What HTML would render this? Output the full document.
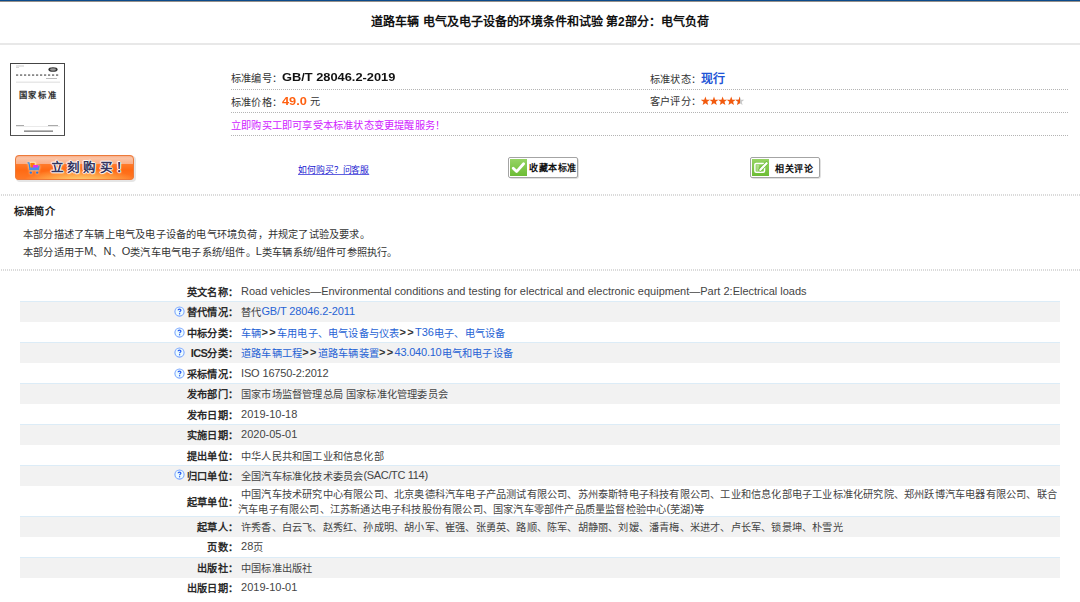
<!DOCTYPE html>
<html lang="zh-CN">
<head>
<meta charset="utf-8">
<style>
html,body{margin:0;padding:0;background:#fff;}
body{width:1080px;height:602px;overflow:hidden;position:relative;font-family:"Liberation Sans",sans-serif;color:#333;}
.abs{position:absolute;white-space:nowrap;}
.topbar{position:absolute;left:0;top:0;width:1080px;height:1px;background:#0b4a8b;}
.topbar2{position:absolute;left:0;top:1px;width:1080px;height:1px;background:#96908a;}
.title{position:absolute;left:0;top:12px;width:1080px;text-align:center;font-size:12px;font-weight:bold;color:#111;line-height:20px;}
.hline{position:absolute;left:0;top:43px;width:1080px;height:2px;background:#e8e8e8;}
.dots{position:absolute;height:1px;background:repeating-linear-gradient(90deg,#b4b4b4 0,#b4b4b4 1px,#fff 1px,#fff 2px);}
.dots2{position:absolute;height:2px;background:repeating-linear-gradient(90deg,#fff 0,#fff 1px,#dadada 1px,#dadada 2px);}
.lbl{font-size:10.2px;color:#333;letter-spacing:.2px;}
.t12{font-size:10.2px;color:#333;letter-spacing:.2px;}
table{border-collapse:collapse;}
.row{position:absolute;left:20px;width:1040px;}
.row.g{background:#f2f2f2;border-top:1px solid #dcecf7;}
.k{position:absolute;right:842px;font-weight:bold;font-size:10.2px;letter-spacing:.2px;line-height:20px;color:#2a2a2a;white-space:nowrap;}
.v{position:absolute;left:238px;font-size:10.2px;letter-spacing:.2px;line-height:20px;color:#444;white-space:nowrap;}
.L{font-size:11px;letter-spacing:0;position:relative;top:-1px;line-height:10px;}
.gt{font-weight:bold;color:#333;font-size:11px;letter-spacing:1.35px;position:relative;top:-1px;line-height:10px;}
a{color:#2763d5;text-decoration:none;}
.q{position:absolute;}
</style>
</head>
<body>
<div class="topbar"></div><div class="topbar2"></div>
<div class="title">道路车辆 电气及电子设备的环境条件和试验 第2部分：电气负荷</div>
<div class="hline"></div>

<!-- cover -->
<svg class="abs" style="left:10px;top:63px;" width="55" height="73" viewBox="0 0 55 73">
<rect x="0.5" y="0.5" width="54" height="72" fill="#fff" stroke="#444" stroke-width="1"/>
<rect x="0" y="72" width="55" height="1" fill="#555"/>
<rect x="6" y="2.6" width="8" height="0.8" fill="#bbb"/>
<rect x="6" y="4" width="3" height="0.8" fill="#ccc"/>
<ellipse cx="43" cy="6.5" rx="4.6" ry="2.3" fill="#333"/>
<ellipse cx="43" cy="6.5" rx="3" ry="1.2" fill="#999"/>
<g fill="#8a8a8a">
<rect x="6" y="11.2" width="2.2" height="1.8"/><rect x="10" y="11.2" width="2.2" height="1.8"/><rect x="14" y="11.2" width="2.2" height="1.8"/><rect x="18" y="11.2" width="2.2" height="1.8"/><rect x="22" y="11.2" width="2.2" height="1.8"/><rect x="26" y="11.2" width="2.2" height="1.8"/><rect x="30" y="11.2" width="2.2" height="1.8"/><rect x="34" y="11.2" width="2.2" height="1.8"/><rect x="38" y="11.2" width="2.2" height="1.8"/><rect x="42" y="11.2" width="2.2" height="1.8"/><rect x="46" y="11.2" width="2.2" height="1.8"/>
</g>
<rect x="36" y="15" width="11" height="0.8" fill="#aaa"/>
<rect x="6" y="18.5" width="44" height="1.5" fill="#e8e8e8"/>
<text x="8.6" y="35" style="font-family:'Liberation Serif',serif;font-weight:bold;font-size:8.3px;letter-spacing:1.75px;" fill="#333">国家标准</text>
<rect x="6" y="63" width="44" height="0.6" fill="#ddd"/>
<rect x="6" y="62" width="8" height="1" fill="#aaa"/>
<rect x="38" y="62" width="10" height="1" fill="#aaa"/>
<rect x="14" y="67.5" width="29" height="1.3" fill="#777"/>
</svg>

<!-- info -->
<div class="abs lbl" style="left:231px;top:71px;line-height:16px;">标准编号：</div>
<div class="abs" style="left:282px;top:69px;line-height:16px;font-size:11.5px;font-weight:bold;color:#111;transform-origin:0 0;transform:scaleX(1.115);">GB/T 28046.2-2019</div>
<div class="abs lbl" style="left:231px;top:94.5px;line-height:16px;">标准价格：</div>
<div class="abs" style="left:282px;top:93px;line-height:16px;font-size:11px;font-weight:bold;color:#ff6010;transform-origin:0 0;transform:scaleX(1.16);">49.0</div>
<div class="abs lbl" style="left:309.5px;top:94px;line-height:16px;">元</div>
<div class="abs t12" style="left:231px;top:118px;line-height:16px;color:#d020ff;">立即购买工即可享受本标准状态变更提醒服务！</div>
<div class="abs lbl" style="left:650px;top:71.5px;line-height:16px;">标准状态：</div>
<div class="abs" style="left:701px;top:70.5px;line-height:16px;font-size:12px;font-weight:bold;letter-spacing:-.2px;color:#1f55d6;">现行</div>
<div class="abs lbl" style="left:650px;top:94px;line-height:16px;">客户评分：</div>
<svg class="abs" style="left:701px;top:96px;" width="45" height="10" viewBox="0 0 45 10">
<defs><clipPath id="half"><rect x="0" y="0" width="4.6" height="10"/></clipPath>
<path id="st" d="M4.4 0 L5.55 3.25 L8.9 3.3 L6.3 5.35 L7.2 8.6 L4.4 6.75 L1.6 8.6 L2.5 5.35 L-0.1 3.3 L3.25 3.25 Z"/></defs>
<use href="#st" x="0" y="0.5" fill="#f25a0e"/>
<use href="#st" x="8.6" y="0.5" fill="#f25a0e"/>
<use href="#st" x="17.2" y="0.5" fill="#f25a0e"/>
<use href="#st" x="25.8" y="0.5" fill="#f25a0e"/>
<use href="#st" x="34.4" y="0.5" fill="#c8c8c8"/>
<g transform="translate(34.4 0.5)"><use href="#st" fill="#f25a0e" clip-path="url(#half)"/></g>
</svg>
<div class="dots" style="left:231px;top:89px;width:838px;"></div>
<div class="dots" style="left:231px;top:112px;width:838px;"></div>
<div class="dots" style="left:231px;top:135px;width:838px;"></div>

<!-- buy button -->
<div class="abs" style="left:16px;top:156px;width:120px;height:26px;border-radius:4px;background:rgba(0,0,0,.10);"></div>
<div class="abs buy" style="left:15px;top:155px;width:119px;height:25px;border-radius:4px;overflow:hidden;">
  <div style="position:absolute;left:0;top:0;width:119px;height:25px;background:linear-gradient(180deg,#f6a27a 0,#fbc4a6 12%,#fab08a 34%,#ff7a2a 38%,#ff6a14 60%,#ff7a28 100%);"></div>
  <div style="position:absolute;left:10px;top:14px;width:110px;height:22px;border-radius:50%;background:radial-gradient(ellipse at 50% 60%,rgba(255,230,140,.95) 0,rgba(255,200,100,.6) 40%,rgba(255,140,40,0) 75%);"></div>
  <div style="position:absolute;left:0;top:0;width:117px;height:23px;border:1px solid #ec7a3a;border-radius:4px;"></div>
</div>
<svg class="abs" style="left:26px;top:161px;filter:drop-shadow(0 0 .8px #fff8d0);" width="15" height="14" viewBox="0 0 15 14">
<rect x="4" y="1.5" width="5" height="6" fill="#ff7a10" stroke="#fff6c0" stroke-width=".6"/>
<rect x="7" y="4" width="5" height="3.5" fill="#e030f0"/>
<path d="M1.5 1.8 L3 1.8 L4 8.5 L12.5 8.5 L13 4.5" fill="none" stroke="#3a88e0" stroke-width="1.3"/>
<rect x="3.5" y="6.5" width="9.5" height="2.5" fill="#4a90e8"/>
<circle cx="4.8" cy="11.6" r="1.2" fill="#2a78e0"/><circle cx="11.2" cy="11.6" r="1.2" fill="#2a78e0"/>
</svg>
<div class="abs buytxt" style="left:51px;top:160px;line-height:16px;font-size:12.5px;font-weight:900;color:#34345e;letter-spacing:3.2px;text-shadow:1px 0 0 rgba(255,255,255,.85),-1px 0 0 rgba(255,255,255,.85),0 1px 0 rgba(255,255,255,.85),0 -1px 0 rgba(255,255,255,.85),1px 1px 1px rgba(255,255,255,.6),-1px -1px 1px rgba(255,255,255,.6);">立刻购买！</div>

<div class="abs" style="left:298px;top:162.5px;font-size:8.8px;color:#2020d0;text-decoration:underline;text-decoration-color:#6060e0;line-height:14px;letter-spacing:-.1px;">如何购买？问客服</div>

<!-- fav button -->
<div class="abs" style="left:509px;top:158px;width:70px;height:21px;border-radius:3px;background:rgba(0,0,0,.12);"></div>
<div class="abs" style="left:508px;top:157px;width:68px;height:19px;border:1px solid #a4a4a4;border-radius:2px;background:#fff;"></div>
<div class="abs" style="left:510px;top:159px;width:17px;height:17px;background:linear-gradient(#96d464,#6cbc34);"></div>
<svg class="abs" style="left:510px;top:159px;" width="17" height="17" viewBox="0 0 17 17"><path d="M3.2 9.2 L6.6 12.6 L13.6 4.8" fill="none" stroke="#fff" stroke-width="2.8" stroke-linejoin="round" stroke-linecap="round"/></svg>
<div class="abs" style="left:529px;top:159.5px;font-size:9px;font-weight:bold;color:#111;line-height:16px;letter-spacing:.55px;">收藏本标准</div>

<!-- comment button -->
<div class="abs" style="left:751px;top:158px;width:70px;height:21px;border-radius:3px;background:rgba(0,0,0,.12);"></div>
<div class="abs" style="left:750px;top:157px;width:68px;height:19px;border:1px solid #a4a4a4;border-radius:2px;background:#fff;"></div>
<div class="abs" style="left:752px;top:159px;width:17px;height:17px;background:linear-gradient(#96d464,#6cbc34);"></div>
<svg class="abs" style="left:752px;top:159px;" width="17" height="17" viewBox="0 0 17 17">
<rect x="2.9" y="4.4" width="9.6" height="8.8" rx="1.2" fill="none" stroke="#fff" stroke-width="1.5"/>
<path d="M4.3 7 H7.2 M4.3 9 H6.8 M4.3 11 H6.4" stroke="#e4f6d4" stroke-width=".9"/>
<path d="M8.6 10.6 L14.6 4.2" stroke="#6cbc34" stroke-width="3.6" stroke-linecap="round"/>
<path d="M8.6 10.6 L14.6 4.2" stroke="#fff" stroke-width="2.2" stroke-linecap="round"/>
<path d="M7.4 12 L7.9 10 L9.3 11.3 Z" fill="#fff"/>
</svg>
<div class="abs" style="left:775px;top:160.5px;font-size:9px;font-weight:bold;color:#111;line-height:16px;letter-spacing:.55px;">相关评论</div>

<div class="dots2" style="left:0;top:194px;width:1080px;"></div>
<div class="abs" style="left:14px;top:204px;font-size:10.2px;font-weight:bold;color:#222;line-height:16px;letter-spacing:.2px;">标准简介</div>
<div id="desc" class="abs t12" style="left:23px;top:226px;line-height:18px;">本部分描述了车辆上电气及电子设备的电气环境负荷，并规定了试验及要求。<br>本部分适用于<span class="L">M</span>、<span class="L">N</span>、<span class="L">O</span>类汽车电气电子系统<span class="L">/</span>组件。<span class="L">L</span>类车辆系统<span class="L">/</span>组件可参照执行。</div>
<div class="dots2" style="left:0;top:269px;width:1080px;"></div>

<!-- table -->
<div class="k" style="top:283.3px;">英文名称：</div>
<div class="v" style="top:283.3px;">&nbsp;<span class="L">Road vehicles—Environmental conditions and testing for electrical and electronic equipment—Part 2:Electrical loads</span></div>
<div class="row g" style="top:301px;height:20px;"></div>
<div class="k" style="top:303.1px;">替代情况：</div>
<svg class="q" style="top:305.5px;left:173.6px;" width="11" height="11" viewBox="0 0 11 11"><circle cx="5.5" cy="5.5" r="4.6" fill="#eefcff" stroke="#78a4ff" stroke-width="1.05"/><path d="M4.1 4.3 C4.1 3.5 4.7 3.1 5.5 3.1 C6.3 3.1 6.9 3.5 6.9 4.2 C6.9 5 5.7 5.2 5.6 6.3" fill="none" stroke="#2b5ef2" stroke-width="1.25"/><circle cx="5.6" cy="7.8" r=".7" fill="#2b5ef2"/></svg>
<div class="v" style="top:303.1px;">&nbsp;替代<a class="L" style="letter-spacing:-.12px">GB/T 28046.2-2011</a></div>
<div class="k" style="top:323.9px;">中标分类：</div>
<svg class="q" style="top:326.5px;left:173.6px;" width="11" height="11" viewBox="0 0 11 11"><circle cx="5.5" cy="5.5" r="4.6" fill="#eefcff" stroke="#78a4ff" stroke-width="1.05"/><path d="M4.1 4.3 C4.1 3.5 4.7 3.1 5.5 3.1 C6.3 3.1 6.9 3.5 6.9 4.2 C6.9 5 5.7 5.2 5.6 6.3" fill="none" stroke="#2b5ef2" stroke-width="1.25"/><circle cx="5.6" cy="7.8" r=".7" fill="#2b5ef2"/></svg>
<div class="v" style="top:323.9px;">&nbsp;<a>车辆</a><b class="gt">&gt;&gt;</b><a>车用电子、电气设备与仪表</a><b class="gt">&gt;&gt;</b><a><span class="L">T36</span>电子、电气设备</a></div>
<div class="row g" style="top:342px;height:20px;"></div>
<div class="k" style="top:344.1px;"><span class="L" style="letter-spacing:-.55px;top:0">ICS</span>分类：</div>
<svg class="q" style="top:346.5px;left:174.4px;" width="11" height="11" viewBox="0 0 11 11"><circle cx="5.5" cy="5.5" r="4.6" fill="#eefcff" stroke="#78a4ff" stroke-width="1.05"/><path d="M4.1 4.3 C4.1 3.5 4.7 3.1 5.5 3.1 C6.3 3.1 6.9 3.5 6.9 4.2 C6.9 5 5.7 5.2 5.6 6.3" fill="none" stroke="#2b5ef2" stroke-width="1.25"/><circle cx="5.6" cy="7.8" r=".7" fill="#2b5ef2"/></svg>
<div class="v" style="top:344.1px;">&nbsp;<a>道路车辆工程</a><b class="gt">&gt;&gt;</b><a>道路车辆装置</a><b class="gt">&gt;&gt;</b><a><span class="L" style="letter-spacing:-.22px">43.040.10</span>电气和电子设备</a></div>
<div class="k" style="top:364.7px;">采标情况：</div>
<svg class="q" style="top:367.5px;left:173.6px;" width="11" height="11" viewBox="0 0 11 11"><circle cx="5.5" cy="5.5" r="4.6" fill="#eefcff" stroke="#78a4ff" stroke-width="1.05"/><path d="M4.1 4.3 C4.1 3.5 4.7 3.1 5.5 3.1 C6.3 3.1 6.9 3.5 6.9 4.2 C6.9 5 5.7 5.2 5.6 6.3" fill="none" stroke="#2b5ef2" stroke-width="1.25"/><circle cx="5.6" cy="7.8" r=".7" fill="#2b5ef2"/></svg>
<div class="v" style="top:364.7px;">&nbsp;<span class="L" style="letter-spacing:-.15px">ISO 16750-2:2012</span></div>
<div class="row g" style="top:383px;height:20px;"></div>
<div class="k" style="top:385.3px;">发布部门：</div>
<div class="v" style="top:385.3px;">&nbsp;国家市场监督管理总局 国家标准化管理委员会</div>
<div class="k" style="top:405.6px;">发布日期：</div>
<div class="v" style="top:405.6px;">&nbsp;<span class="L">2019-10-18</span></div>
<div class="row g" style="top:424px;height:20px;"></div>
<div class="k" style="top:426.1px;">实施日期：</div>
<div class="v" style="top:426.1px;">&nbsp;<span class="L">2020-05-01</span></div>
<div class="k" style="top:446.6px;">提出单位：</div>
<div class="v" style="top:446.6px;">&nbsp;中华人民共和国工业和信息化部</div>
<div class="row g" style="top:465px;height:20px;"></div>
<div class="k" style="top:466.7px;">归口单位：</div>
<svg class="q" style="top:469px;left:173.6px;" width="11" height="11" viewBox="0 0 11 11"><circle cx="5.5" cy="5.5" r="4.6" fill="#eefcff" stroke="#78a4ff" stroke-width="1.05"/><path d="M4.1 4.3 C4.1 3.5 4.7 3.1 5.5 3.1 C6.3 3.1 6.9 3.5 6.9 4.2 C6.9 5 5.7 5.2 5.6 6.3" fill="none" stroke="#2b5ef2" stroke-width="1.25"/><circle cx="5.6" cy="7.8" r=".7" fill="#2b5ef2"/></svg>
<div class="v" style="top:466.7px;">&nbsp;全国汽车标准化技术委员会<span class="L" style="letter-spacing:-.33px">(SAC/TC 114)</span></div>
<div class="row g" style="top:516px;height:20px;"></div>
<div class="k" style="top:517.8px;">起草人：</div>
<div class="v" style="top:517.8px;">&nbsp;许秀香、白云飞、赵秀红、孙成明、胡小军、崔强、张勇英、路顺、陈军、胡静丽、刘嫒、潘青梅、米进才、卢长军、锁景坤、朴雪光</div>
<div class="k" style="top:538.3px;">页数：</div>
<div class="v" style="top:538.3px;">&nbsp;<span class="L">28</span>页</div>
<div class="row g" style="top:557px;height:20px;"></div>
<div class="k" style="top:558.6px;">出版社：</div>
<div class="v" style="top:558.6px;">&nbsp;中国标准出版社</div>
<div class="k" style="top:579.1px;">出版日期：</div>
<div class="v" style="top:579.1px;">&nbsp;<span class="L">2019-10-01</span></div>
<div class="k" style="top:493px;">起草单位：</div>
<div class="v" style="top:486.5px;line-height:15px;">&nbsp;中国汽车技术研究中心有限公司、北京奥德科汽车电子产品测试有限公司、苏州泰斯特电子科技有限公司、工业和信息化部电子工业标准化研究院、郑州跃博汽车电器有限公司、联合<br>汽车电子有限公司、江苏新通达电子科技股份有限公司、国家汽车零部件产品质量监督检验中心<span class="L">(</span>芜湖<span class="L">)</span>等</div>
</body>
</html>
